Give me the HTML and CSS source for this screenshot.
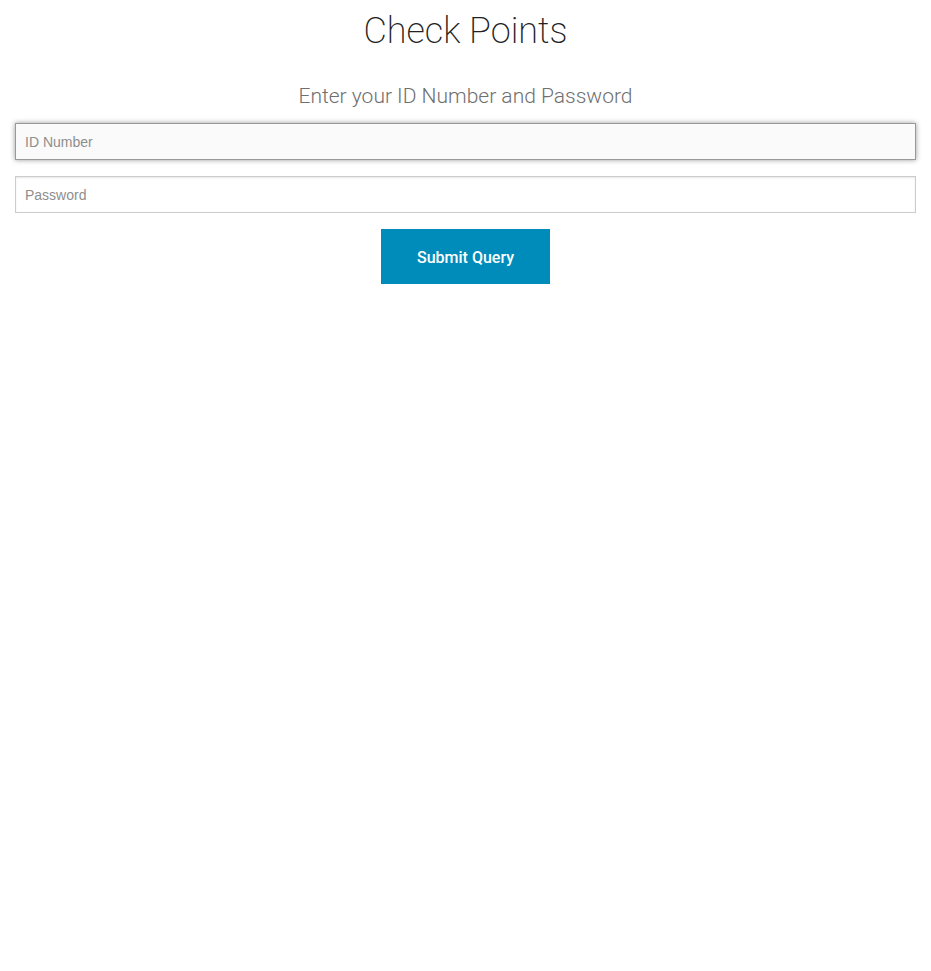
FILE: index.html
```html
<!DOCTYPE html>
<html lang="en">
<head>
<meta charset="utf-8">
<meta name="viewport" content="width=device-width, initial-scale=1">
<title>Check Points</title>
<link rel="stylesheet" href="styles.css">
</head>
<body>
<main class="page">
<h1 class="title">Check Points</h1>
<h2 class="subtitle">Enter your ID Number and Password</h2>
<form class="form">
<input class="field field-active" type="text" aria-label="ID Number" placeholder="ID Number">
<input class="field" type="password" aria-label="Password" placeholder="Password">
<button class="submit" type="submit">Submit Query</button>
</form>
</main>
</body>
</html>
```
FILE: styles.css
```css
*, *::before, *::after {
  box-sizing: border-box;
}

body {
  margin: 0;
  background: #fff;
  color: #222;
  font-family: Roboto, "Liberation Sans", sans-serif;
}

.page {
  padding: 4px 15px 0;
  text-align: center;
}

.title {
  margin: 0;
  font-size: 36px;
  font-weight: 200;
  line-height: 54px;
}

.subtitle {
  margin: 22px 0 11px;
  color: #6f6f6f;
  font-size: 21px;
  font-weight: 300;
  line-height: 32px;
}

.form {
  display: flex;
  flex-direction: column;
  align-items: center;
  gap: 16px;
}

.field {
  width: 100%;
  height: 37px;
  margin: 0;
  padding: 8px 9px;
  border: 1px solid #ccc;
  border-radius: 0;
  outline: none;
  background: #fff;
  box-shadow: inset 0 1px 2px rgba(0, 0, 0, 0.1);
  color: #404040;
  font: 14px "Liberation Sans", sans-serif;
}

.field::placeholder {
  color: #8e8e8e;
  opacity: 1;
}

.field-active,
.field:focus {
  border-color: #999;
  background: #fafafa;
  box-shadow: 0 0 5px #999;
}

.submit {
  margin: 0;
  padding: 17px 36px 15px;
  border: 0;
  background: #008cba;
  color: #fff;
  font: 500 16px/23px Roboto, "Liberation Sans", sans-serif;
}
```
